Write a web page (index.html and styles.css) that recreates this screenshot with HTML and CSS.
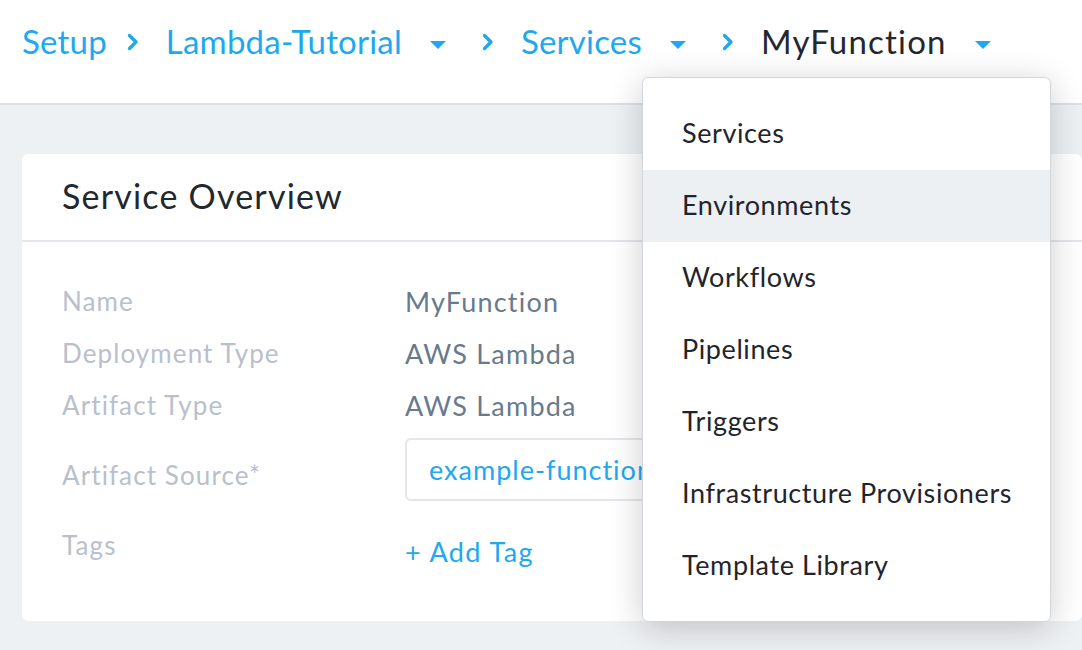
FILE: index.html
```html
<!DOCTYPE html>
<html>
<head>
<meta charset="utf-8">
<link rel="stylesheet" href="styles.css">
</head>
<body>
<header class="topbar">
  <nav class="crumbs">
    <span class="crumb link">Setup</span>
    <svg class="chev" viewBox="0 0 12 18"><path d="M2.5 2.5 L9 9 L2.5 15.5" /></svg>
    <span class="crumb link">Lambda-Tutorial</span>
    <svg class="caret" viewBox="0 0 16 8"><path d="M0 0 H16 L8 8 Z" /></svg>
    <svg class="chev" viewBox="0 0 12 18"><path d="M2.5 2.5 L9 9 L2.5 15.5" /></svg>
    <span class="crumb link">Services</span>
    <svg class="caret" viewBox="0 0 16 8"><path d="M0 0 H16 L8 8 Z" /></svg>
    <svg class="chev" viewBox="0 0 12 18"><path d="M2.5 2.5 L9 9 L2.5 15.5" /></svg>
    <span class="crumb current">MyFunction</span>
    <svg class="caret" viewBox="0 0 16 8"><path d="M0 0 H16 L8 8 Z" /></svg>
  </nav>
</header>
<main class="content">
  <section class="card">
    <div class="card-head">Service Overview</div>
    <div class="card-body">
      <div class="row"><span class="label">Name</span><span class="value">MyFunction</span></div>
      <div class="row"><span class="label">Deployment Type</span><span class="value">AWS Lambda</span></div>
      <div class="row"><span class="label">Artifact Type</span><span class="value">AWS Lambda</span></div>
      <div class="row row-source"><span class="label">Artifact Source*</span><div class="source-box">example-function:latest</div></div>
      <div class="row row-tags"><span class="label">Tags</span><span class="add-tag">+ Add Tag</span></div>
    </div>
  </section>
</main>
<div class="menu">
  <div class="menu-item">Services</div>
  <div class="menu-item active">Environments</div>
  <div class="menu-item">Workflows</div>
  <div class="menu-item">Pipelines</div>
  <div class="menu-item">Triggers</div>
  <div class="menu-item">Infrastructure Provisioners</div>
  <div class="menu-item">Template Library</div>
</div>
</body>
</html>
```
FILE: styles.css
```css
* { box-sizing: border-box; }
html, body { margin: 0; padding: 0; }
body {
  width: 1082px;
  height: 650px;
  overflow: hidden;
  background: #eef1f4;
  font-family: Lato, "Noto Sans", sans-serif;
  position: relative;
}
.topbar {
  height: 105px;
  background: #fff;
  border-bottom: 2px solid #dcdfe4;
  padding-left: 22px;
}
.crumbs {
  display: flex;
  align-items: center;
  height: 82px;
}
.crumb { font-size: 33px; line-height: 1; }
.link { color: #1ea8f0; letter-spacing: 0.2px; }
.current { color: #23282f; letter-spacing: 1.2px; }
.chev {
  width: 12px; height: 18px;
  margin: 1px 27px 0 20px;
  fill: none; stroke: #1ea8f0; stroke-width: 3.4; stroke-linecap: round; stroke-linejoin: round;
}
.caret {
  width: 16px; height: 8px;
  fill: #1ea8f0;
  margin: 7px 36px 0 28px;
}
.caret + .chev { margin-left: 0; }
.content { padding: 49px 0 0 22px; }
.card {
  background: #fff;
  border-radius: 6px;
  height: 467px;
}
.card-head {
  height: 88px;
  border-bottom: 2px solid #e3e6ea;
  padding: 0 0 4px 40px;
  display: flex;
  align-items: center;
  font-size: 34px;
  letter-spacing: 1.2px;
  color: #23282f;
}
.card-body { padding: 33px 0 0 40px; }
.row {
  display: flex;
  align-items: center;
  height: 52px;
}
.label { width: 343px; color: #b9c0cb; font-size: 26px; letter-spacing: 1.1px; }
.value { color: #687a8d; font-size: 27px; letter-spacing: 1.2px; }
.row-source { height: 63px; margin-top: 7px; }
.row-source .label { padding-top: 10px; }
.source-box {
  width: 420px;
  height: 63px;
  border: 2px solid #e3e6ea;
  border-radius: 6px;
  padding-left: 22px;
  display: flex;
  align-items: center;
  color: #1ea8f0;
  font-size: 27px;
  letter-spacing: 1px;
  white-space: nowrap;
  overflow: hidden;
}
.row-tags { align-items: flex-start; margin-top: 20px; height: 60px; }
.row-tags .label { line-height: 48px; }
.add-tag { color: #1ea8f0; line-height: 48px; padding-top: 7px; font-size: 27px; letter-spacing: 1.4px; }
.menu {
  position: absolute;
  left: 642px;
  top: 77px;
  width: 409px;
  height: 545px;
  background: #fff;
  border: 1px solid #d3d7dc;
  border-radius: 6px;
  box-shadow: 0 6px 34px rgba(0, 0, 0, 0.2);
  padding-top: 20px;
}
.menu-item {
  height: 72px;
  display: flex;
  align-items: center;
  padding: 0 0 3px 39px;
  font-size: 27px;
  letter-spacing: 0.6px;
  color: #1f252c;
}
.menu-item.active { background: #edf0f3; }
```
